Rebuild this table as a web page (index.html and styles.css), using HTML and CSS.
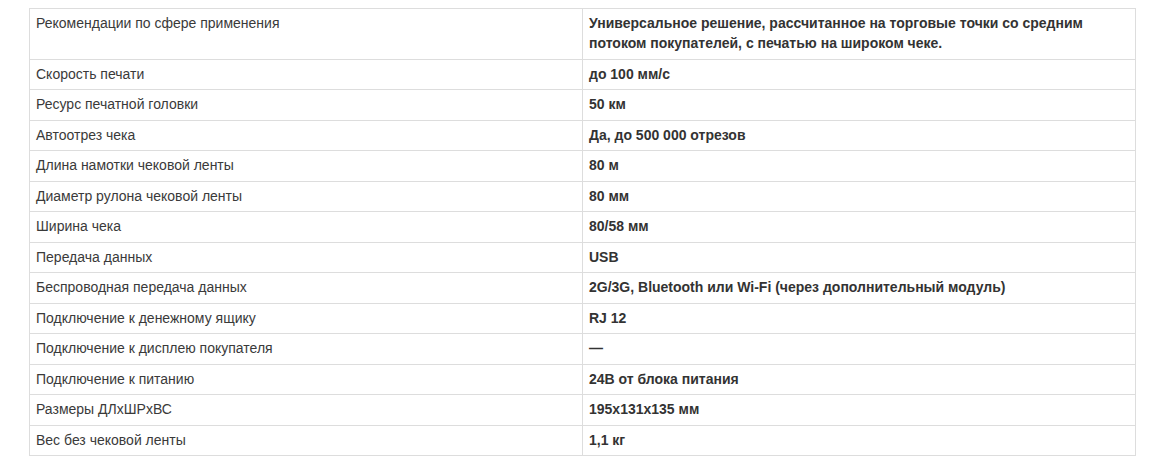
FILE: index.html
```html
<!DOCTYPE html>
<html lang="ru">
<head>
<meta charset="utf-8">
<title>Характеристики</title>
<link rel="stylesheet" href="styles.css">
</head>
<body>
<table class="specs">
  <tbody>
    <tr><td class="name">Рекомендации по сфере применения</td><td class="value">Универсальное решение, рассчитанное на торговые точки со средним потоком покупателей, с печатью на широком чеке.</td></tr>
    <tr><td class="name">Скорость печати</td><td class="value">до 100 мм/с</td></tr>
    <tr><td class="name">Ресурс печатной головки</td><td class="value">50 км</td></tr>
    <tr><td class="name">Автоотрез чека</td><td class="value">Да, до 500 000 отрезов</td></tr>
    <tr><td class="name">Длина намотки чековой ленты</td><td class="value">80 м</td></tr>
    <tr><td class="name">Диаметр рулона чековой ленты</td><td class="value">80 мм</td></tr>
    <tr><td class="name">Ширина чека</td><td class="value">80/58 мм</td></tr>
    <tr><td class="name">Передача данных</td><td class="value">USB</td></tr>
    <tr><td class="name">Беспроводная передача данных</td><td class="value">2G/3G, Bluetooth или Wi-Fi (через дополнительный модуль)</td></tr>
    <tr><td class="name">Подключение к денежному ящику</td><td class="value">RJ 12</td></tr>
    <tr><td class="name">Подключение к дисплею покупателя</td><td class="value">—</td></tr>
    <tr><td class="name">Подключение к питанию</td><td class="value">24В от блока питания</td></tr>
    <tr><td class="name">Размеры ДЛхШРхВС</td><td class="value">195х131х135 мм</td></tr>
    <tr><td class="name">Вес без чековой ленты</td><td class="value">1,1 кг</td></tr>
  </tbody>
</table>
</body>
</html>
```

FILE: styles.css
```css
html, body {
  margin: 0;
  padding: 0;
  background: #ffffff;
}

body {
  padding: 8px 14px 0 29px;
  font-family: "Liberation Sans", Arial, sans-serif;
  font-size: 14px;
  color: #333333;
}

.specs {
  width: 1107px;
  border-collapse: collapse;
  table-layout: fixed;
}

.specs td {
  border: 1px solid #dddddd;
  padding: 4px 6px 5.5px;
  line-height: 20px;
  vertical-align: top;
  width: 50%;
}

.specs .name {
  font-weight: normal;
  color: #3a3a3a;
}

.specs .value {
  font-weight: bold;
  color: #333333;
}
```
